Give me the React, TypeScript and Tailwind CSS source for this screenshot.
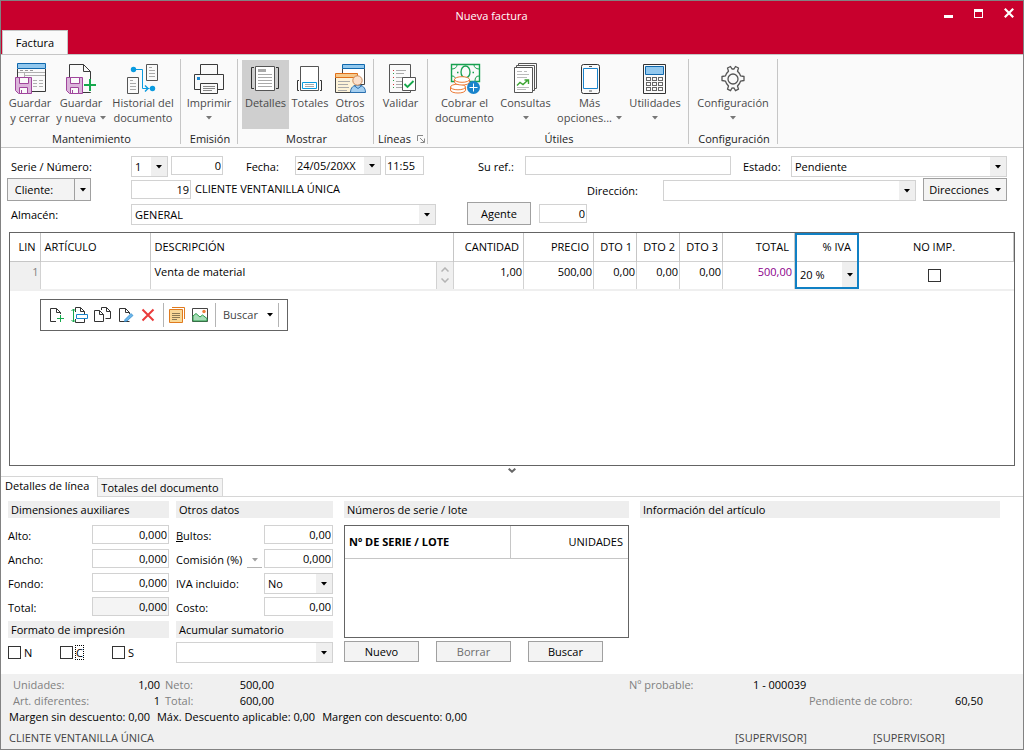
import type { ReactNode } from "react";
import clsx from "clsx";

function Svg({ children, small }: { children: ReactNode; small?: boolean }) {
  return (
    <svg
      viewBox={small ? "0 0 18 18" : "0 0 32 32"}
      className={clsx("shrink-0", small ? "h-[18px] w-[18px]" : "h-8 w-8")}
      fill="none"
      aria-hidden="true"
    >
      {children}
    </svg>
  );
}

function Caret({ className = "text-black" }: { className?: string }) {
  return (
    <svg viewBox="0 0 6 4" className={clsx("h-1 w-1.5 shrink-0", className)} aria-hidden="true">
      <path d="M0 0h6L3 3.6z" fill="currentColor" />
    </svg>
  );
}

function Floppy() {
  return (
    <>
      <path d="M1.5 15.5h16v16h-13l-3-3z" fill="#dbb4da" stroke="#a0459c" />
      <path d="M5.5 15.5h9v6h-9z" fill="#fafafa" stroke="#a0459c" />
      <path d="M5.5 31.5v-6h8v6z" fill="#fafafa" stroke="#a0459c" />
      <path d="M7.5 28v3" stroke="#a0459c" />
    </>
  );
}

/* Ribbon icons */

const IconSaveClose = () => (
  <Svg>
    <path d="M3.5 7v8M31.5 7v22.5H18" stroke="#3a3a3a" />
    <path d="M3.5 1.5h28v5h-28z" fill="#92c8ee" stroke="#1068ad" />
    <path d="M6 8.5h3m2 0h3m2 0h3" stroke="#999" />
    <path d="M4 10.5h27M10.5 11v4M10 13.5h21" stroke="#b0b0b0" />
    <path d="M19 18.5h4m2 0h4m-10 3h4m2 0h4m-10 3h4m2 0h4" stroke="#b0b0b0" />
    <Floppy />
  </Svg>
);

const IconSaveNew = () => (
  <Svg>
    <path d="M4.5 15V2.5h14l7 7V18M25.500 30v.5H18" stroke="#3a3a3a" />
    <path d="M18.5 2.5v7h7" stroke="#3a3a3a" />
    <Floppy />
    <path d="M25 17v12M19 23h12" stroke="#16a84c" strokeWidth="2" />
  </Svg>
);

const IconHistory = () => (
  <Svg>
    <path d="M19.5 2.5h11v16h-11zM.5 15.5h11v16H.5z" stroke="#555" />
    <path d="M22 5.5h3m-3 3h6m-6 3h6m-6 3h6M3 18.5h3m-3 3h6m-6 3h6m-6 3h6" stroke="#aaa" />
    <path d="M7 7.500h8.500v19h7" stroke="#0a9be0" />
    <path d="M18 23.5l3 3-3 3" stroke="#0a9be0" strokeWidth="1.4" />
    <circle cx="6.500" cy="7.500" r="2.700" fill="#0a9be0" />
    <circle cx="25.500" cy="26.500" r="2.700" fill="#0a9be0" />
  </Svg>
);

const IconPrint = () => (
  <Svg>
    <path d="M7.5 12.5v-10h17v10" stroke="#3a3a3a" />
    <path d="M7 27.5H1.5v-15h29v15H25" stroke="#3a3a3a" />
    <path d="M7.5 21.5h17v10h-17z" stroke="#3a3a3a" />
    <path d="M10 24.5h12m-12 2h12m-12 2h9" stroke="#888" />
    <path d="M4 15h3v3H4z" fill="#1e88d0" />
  </Svg>
);

const IconDetails = () => (
  <Svg>
    <path d="M5.5 4.5h19v24h-19z" fill="#fff" stroke="#555" />
    <path d="M8 7h8v3H8z" fill="#aaa" />
    <path d="M8 12.5h14m-14 3h14m-14 3h14m-14 3h14m-14 3h14" stroke="#aaa" />
    <path d="M4 5.5H1.5v21H4M26 5.5h2.500v21H26" stroke="#333" />
  </Svg>
);

const IconTotals = () => (
  <Svg>
    <path d="M6.5 4.5h18v24h-18z" fill="#fff" stroke="#555" />
    <path d="M8.5 20.5h14v6h-14z" fill="#fff" stroke="#0a9be0" />
    <path d="M11 22.5h9m-9 2h9" stroke="#aaa" />
    <path d="M5 18.5H3.5v10H5M26 18.5h1.500v10H26" stroke="#333" />
  </Svg>
);

const IconOther = () => (
  <Svg>
    <path d="M8.5 6.5h22v16h-22z" fill="#fff" stroke="#444" />
    <path d="M8.5 2.5h22v4h-22z" fill="#92c8ee" stroke="#1068ad" />
    <path d="M1.5 15.5h22v15h-22z" fill="#fdf3d8" stroke="#444" />
    <path d="M1.5 11.5h22v4h-22z" fill="#f6c98b" stroke="#e0701a" />
    <path d="M4 19.5h12m-12 3h10m-10 3h11m-11 3h9" stroke="#aaa" />
    <path d="M16.500 30.500c0-5 3-7.500 7.500-7.500s7.500 2.500 7.500 7.500z" fill="#a5cff0" stroke="#2a6fae" />
    <path d="M20 23.5l4 3 4-3" stroke="#2a6fae" />
    <circle cx="23.500" cy="18.500" r="4.700" fill="#fbe0cb" stroke="#c98a5a" />
  </Svg>
);

const IconValidate = () => (
  <Svg>
    <path d="M4.5 2.5h21v28h-21z" stroke="#555" />
    <path d="M11 8.5h10m-10 3h8m-8 4h7m-7 4h6m-6 3h6m-6 3h6" stroke="#aaa" />
    <path d="M8 8.5h1m-1 7h1m-1 7h1" stroke="#d4353a" />
    <path d="M8 11.5h1m-1 7h1m-1 7h1" stroke="#2a9d4a" />
    <path d="M17.5 15.5h13v13h-13z" fill="#fff" stroke="#555" />
    <path d="M19.500 22l3 3 6-6" stroke="#16a84c" strokeWidth="1.800" />
  </Svg>
);

const IconCash = () => (
  <Svg>
    <path d="M2.500 2.500h28v17h-28z" stroke="#17a04f" strokeWidth="1.400" />
    <path d="M3 7c3 0 5-2 5-4M30 7c-3 0-5-2-5-4M30 14c-3 0-4 2-4 5M3 14c2 0 3 1 3 2" stroke="#17a04f" />
    <ellipse cx="16.500" cy="10" rx="4.500" ry="6" stroke="#17a04f" strokeWidth="1.300" />
    <path d="M8 10.500h1.500m14 0H25" stroke="#17a04f" strokeWidth="1.600" />
    <g fill="#fff" stroke="#ec7a35">
      <path d="M1.500 25v3c0 4 15 4 15 0v-3" />
      <ellipse cx="9" cy="25" rx="7.500" ry="2.800" />
      <path d="M5.500 17v3c0 4 15 4 15 0v-3" />
      <ellipse cx="13" cy="17.500" rx="7.500" ry="2.800" />
    </g>
    <circle cx="24.500" cy="25.500" r="6.500" fill="#1a84cc" />
    <path d="M24.500 21.500v8m-4-4h8" stroke="#fff" />
  </Svg>
);

const IconQueries = () => (
  <Svg>
    <path d="M8.5 3V1.500h18v25h-2M6.500 5V3.500h18v25h-2" stroke="#555" />
    <path d="M4.5 5.5h18v25h-18z" fill="#fff" stroke="#555" />
    <path d="M7 9.5h5m2 0h3m-10 3h12m-12 3h10m-10 10h12m-12 2h9" stroke="#bbb" />
    <path d="M7 23.500l3-3 3 2 5-4.500M14.500 18h4v4" stroke="#3fa535" strokeWidth="1.400" />
  </Svg>
);

const IconPhone = () => (
  <Svg>
    <rect x="7.500" y="2.500" width="18" height="29" rx="2" stroke="#333" />
    <path d="M9.5 6.5h14v20h-14z" fill="#fff" stroke="#1a84cc" />
    <path d="M15 4.5h3m-3 24.500h3" stroke="#555" />
  </Svg>
);

const IconCalculator = () => (
  <Svg>
    <path d="M4.5 2.5h22v29h-22z" stroke="#333" />
    <path d="M6.5 4.5h18v8h-18z" fill="#92c8ee" stroke="#1068ad" />
    <g stroke="#666">
      {[15.5, 20.5, 25.5].map((y) =>
        [7.5, 13.5, 19.5].map((x) => <rect key={`${x}-${y}`} x={x} y={y} width="4" height="3" />)
      )}
    </g>
  </Svg>
);

const IconGear = () => (
  <Svg>
    <g transform="translate(-1 1)" stroke="#555" strokeWidth="1.300" strokeLinejoin="round">
      <path d="M12.500 8.200l-1-3.200 3-1.500 1.500 2.500 1-.2 1 .2 1.500-2.500 3 1.500-1 3.200 2 2.300 1 2.300 3.500.700v4l-3.500.700-1 2.300-2 2.500 1 3.200-3 1.500-1.500-2.700-1 .2-1-.2-1.500 2.700-3-1.500 1-3.200-2-2.500-1-2.300-3.500-.700v-4l3.500-.7 1-2.300z" />
      <circle cx="17" cy="16" r="5" />
    </g>
  </Svg>
);

/* Ribbon */

type RibbonItem = {
  lines: string[];
  icon: ReactNode;
  width: string;
  menu?: boolean;
  active?: boolean;
};

type RibbonGroup = {
  name: string;
  width: string;
  indent?: string;
  launcher?: boolean;
  items: RibbonItem[];
};

const GROUPS: RibbonGroup[] = [
  {
    name: "Mantenimiento",
    width: "w-[179px]",
    indent: "pl-1",
    items: [
      { lines: ["Guardar", "y cerrar"], icon: <IconSaveClose />, width: "w-[50px]" },
      { lines: ["Guardar", "y nueva"], icon: <IconSaveNew />, width: "w-[52px]", menu: true },
      { lines: ["Historial del", "documento"], icon: <IconHistory />, width: "w-[72px]" },
    ],
  },
  {
    name: "Emisión",
    width: "w-[56px]",
    items: [{ lines: ["Imprimir"], icon: <IconPrint />, width: "w-[56px]", menu: true }],
  },
  {
    name: "Mostrar",
    width: "w-[135px]",
    indent: "pl-1",
    items: [
      { lines: ["Detalles"], icon: <IconDetails />, width: "w-[47px]", active: true },
      { lines: ["Totales"], icon: <IconTotals />, width: "w-[42px]" },
      { lines: ["Otros", "datos"], icon: <IconOther />, width: "w-[38px]" },
    ],
  },
  {
    name: "Líneas",
    width: "w-[53px]",
    launcher: true,
    items: [{ lines: ["Validar"], icon: <IconValidate />, width: "w-[53px]" }],
  },
  {
    name: "Útiles",
    width: "w-[260px]",
    indent: "pl-1",
    items: [
      { lines: ["Cobrar el", "documento"], icon: <IconCash />, width: "w-[65px]" },
      { lines: ["Consultas"], icon: <IconQueries />, width: "w-[57px]", menu: true },
      { lines: ["Más", "opciones..."], icon: <IconPhone />, width: "w-[71px]", menu: true },
      { lines: ["Utilidades"], icon: <IconCalculator />, width: "w-[60px]", menu: true },
    ],
  },
  {
    name: "Configuración",
    width: "w-[88px]",
    items: [{ lines: ["Configuración"], icon: <IconGear />, width: "w-[88px]", menu: true }],
  },
];

function RibbonButton({ lines, icon, width, menu, active }: RibbonItem) {
  return (
    <button
      type="button"
      aria-pressed={active}
      className={clsx(
        "flex h-[69px] flex-col items-center pt-0.5 leading-[15px] whitespace-nowrap text-[#4a4a4a]",
        width,
        active && "bg-[#cfcfcf]"
      )}
    >
      {icon}
      <span className="mt-px">{lines[0]}</span>
      <span className="flex min-h-[15px] items-center gap-1">
        {lines[1]}
        {menu && <Caret className="text-[#777]" />}
      </span>
    </button>
  );
}

function Ribbon() {
  return (
    <nav className="flex h-[94px] border-y border-[#c6c6c6] bg-[#fafafa]">
      {GROUPS.map((g) => (
        <div key={g.name} className="flex">
          <section className={clsx("pt-[5px]", g.width)}>
            <div className={clsx("flex", g.indent)}>
              {g.items.map((item) => (
                <RibbonButton key={item.lines.join(" ")} {...item} />
              ))}
            </div>
            <div className="mt-0.5 flex items-center justify-center gap-1.5 pl-0.5 leading-4 text-[#222]">
              {g.name}
              {g.launcher && (
                <svg viewBox="0 0 8 8" className="h-2 w-2" fill="none" stroke="#888" aria-hidden="true">
                  <path d="M.5 6V.5H6M3 3l4 4M7.500 3.500v4h-4" />
                </svg>
              )}
            </div>
          </section>
          <div className="mt-1 h-[85px] w-px bg-[#c6c6c6]" />
        </div>
      ))}
    </nav>
  );
}

/* Form controls */

type ControlProps = { label: string; value?: string; className: string };

function Field({ label, value = "", className, right, readOnly }: ControlProps & { right?: boolean; readOnly?: boolean }) {
  return (
    <input
      aria-label={label}
      defaultValue={value}
      readOnly={readOnly}
      className={clsx(
        "h-[19px] min-w-0 border border-[#d2d2d2] px-px outline-none",
        right && "text-right",
        readOnly ? "bg-[#f4f4f4]" : "bg-white",
        className
      )}
    />
  );
}

function Combo({ label, value = "", className, height = "h-[21px]" }: ControlProps & { height?: string }) {
  return (
    <div className={clsx("relative border border-[#d2d2d2] bg-white", height, className)}>
      <select aria-label={label} className="block h-full w-full appearance-none bg-transparent pr-4 pl-[3px] outline-none">
        <option>{value}</option>
      </select>
      <span className="pointer-events-none absolute inset-y-0 right-0 flex w-4 items-center justify-center bg-[#efefef]">
        <Caret />
      </span>
    </div>
  );
}

const BUTTON = "flex items-center justify-center border border-[#a0a0a0] bg-[#f3f3f3]";

function InvoiceForm() {
  return (
    <form className="pt-1.5 pr-4 pl-[10px] leading-4">
      <div className="flex h-6 items-start pt-0.5">
        <span className="w-[120px] pt-[3px]">Serie / Número:</span>
        <Combo label="Serie" value="1" className="w-[37px]" />
        <Field label="Número" value="0" right className="ml-[3px] w-[52px]" />
        <span className="w-[72px] pt-[3px] pl-[23px]">Fecha:</span>
        <Combo label="Fecha" value="24/05/20XX" height="h-[19px]" className="w-[86px] [&>select]:pl-px" />
        <Field label="Hora" value="11:55" className="ml-1 w-[39px]" />
        <span className="w-[101px] pt-[3px] pl-[54px]">Su ref.:</span>
        <Field label="Su ref." className="flex-1" />
        <span className="w-[60px] pt-[3px] pl-3">Estado:</span>
        <Combo label="Estado" value="Pendiente" className="flex-[1.06]" />
      </div>

      <div className="flex h-6 items-start">
        <div className="-ml-1 flex h-[23px] w-[84px]">
          <button type="button" className={clsx(BUTTON, "w-[68px] pr-3.5")}>
            Cliente:
          </button>
          <button type="button" aria-label="Opciones de cliente" className={clsx(BUTTON, "flex-1 border-l-0")}>
            <Caret />
          </button>
        </div>
        <Field label="Código de cliente" value="19" right className="mt-0.5 ml-10 w-[60px]" />
        <span className="flex-1 pt-[3px] pl-1">CLIENTE VENTANILLA ÚNICA</span>
        <span className="w-[76px] pt-[5px]">Dirección:</span>
        <Combo label="Dirección" className="mt-0.5 w-[253px]" />
        <button type="button" className={clsx(BUTTON, "ml-[7px] h-[23px] w-[84px] gap-1.5")}>
          Direcciones
          <Caret />
        </button>
      </div>

      <div className="flex h-6 items-start">
        <span className="w-[120px] pt-[5px]">Almacén:</span>
        <Combo label="Almacén" value="GENERAL" className="mt-0.5 w-[305px]" />
        <button type="button" className={clsx(BUTTON, "ml-[31px] h-[23px] w-16")}>
          Agente
        </button>
        <Field label="Agente" value="0" right className="mt-0.5 ml-2 w-12" />
      </div>
    </form>
  );
}

/* Line grid */

const COLUMNS = [
  { name: "LIN", width: "w-[30px]", align: "text-right pr-1" },
  { name: "ARTÍCULO", width: "w-[110px]", align: "text-left pl-1" },
  { name: "DESCRIPCIÓN", width: "", align: "text-left pl-1" },
  { name: "CANTIDAD", width: "w-[70px]", align: "text-right pr-1" },
  { name: "PRECIO", width: "w-[70px]", align: "text-right pr-1" },
  { name: "DTO 1", width: "w-[43px]", align: "text-right pr-1" },
  { name: "DTO 2", width: "w-[43px]", align: "text-right pr-1" },
  { name: "DTO 3", width: "w-[43px]", align: "text-right pr-1" },
  { name: "TOTAL", width: "w-[72px]", align: "text-right pr-[5px]" },
  { name: "% IVA", width: "w-[64px]", align: "text-right pr-[7px]" },
  { name: "NO IMP.", width: "w-[155px]", align: "text-center pr-1" },
];

const AMOUNTS = ["1,00", "500,00", "0,00", "0,00", "0,00"];

function Separator() {
  return <span className="h-6 w-px bg-[#b4b4b4]" />;
}

function PageShape() {
  return <path d="M8 15.5H2.5v-13h6l4 4V8M8.5 2.5v4h4" stroke="#333" />;
}

function GridToolbar() {
  return (
    <div className="mt-2 ml-[30px] flex h-8 w-[248px] items-center border border-[#646464] bg-white pl-[7px]">
      <div className="flex gap-[5px]">
        <button type="button" aria-label="Nueva línea">
          <Svg small>
            <PageShape />
            <path d="M12.5 9v7M9 12.500h7" stroke="#16a84c" />
          </Svg>
        </button>
        <button type="button" aria-label="Insertar línea">
          <Svg small>
            <path d="M4.500 6V1.500h5l4 4V8M9.500 1.500v4h4M4.500 13v3.500h9V13" stroke="#333" />
            <path d="M5.500 8.500h11v4h-11z" fill="#fff" stroke="#1a84cc" />
            <path d="M2.500 3v13M.5 5l2-2 2 2M.5 14l2 2 2-2" stroke="#16a84c" />
          </Svg>
        </button>
        <button type="button" aria-label="Duplicar línea">
          <Svg small>
            <path d="M7.500 4V1.500h5l4 4v7h-5M12.500 1.500v4h4" stroke="#333" />
            <path d="M.5 4.500h5l4 4v7h-9z" fill="#fff" stroke="#333" />
            <path d="M5.500 4.500v4h4" stroke="#333" />
          </Svg>
        </button>
        <button type="button" aria-label="Modificar línea">
          <Svg small>
            <PageShape />
            <path d="M8 15.500h4.500" stroke="#333" />
            <path d="M8 13.500l6-6 2 2-6 5.500-2.500.500z" fill="#6bb5ea" stroke="#2a86c8" strokeWidth=".7" />
          </Svg>
        </button>
        <button type="button" aria-label="Borrar línea">
          <Svg small>
            <path d="M2.500 3.500l11 11M13.500 3.500l-11 11" stroke="#ea3b3b" strokeWidth="2" />
          </Svg>
        </button>
      </div>
      <span className="w-[5px]" />
      <Separator />
      <div className="mr-1.5 ml-1 flex gap-[5px]">
        <button type="button" aria-label="Texto">
          <Svg small>
            <path d="M4 1.500h12.500V13" stroke="#e07b1f" />
            <path d="M1.500 3.500h13v13h-13z" fill="#f8d998" stroke="#e07b1f" />
            <path d="M4 7.500h8m-8 2h8m-8 2h8m-8 2h5" stroke="#8a7a55" />
          </Svg>
        </button>
        <button type="button" aria-label="Imagen">
          <Svg small>
            <path d="M1.500 2.500h15v13h-15z" fill="#fff" stroke="#444" />
            <path d="M2 10l3-2.500 4 3.500 2.500-2 4.500 3.500V15H2z" fill="#a8dcb8" stroke="#2a9d4a" />
            <circle cx="13" cy="5.500" r="1.700" fill="#ef7d3a" />
          </Svg>
        </button>
      </div>
      <Separator />
      <button type="button" className="flex items-center gap-[9px] pr-[5px] pl-[7px] text-[#444]">
        Buscar
        <Caret />
      </button>
      <Separator />
    </div>
  );
}

function LinesGrid() {
  return (
    <div className="mx-2 mt-1.5 h-[234px] border border-[#646464] bg-white">
      <table className="w-full table-fixed border-collapse">
        <thead>
          <tr className="h-7 border-b border-[#c6c6c6]">
            {COLUMNS.map((c) => (
              <th
                key={c.name}
                className={clsx(
                  "border-r border-[#c6c6c6] font-normal",
                  c.width,
                  c.align,
                  c.name === "% IVA" && "relative"
                )}
              >
                {c.name}
                {/* Focus frame that runs over the header and the cell below */}
                {c.name === "% IVA" && (
                  <span className="pointer-events-none absolute top-0 -right-px left-0 z-10 h-14 border-2 border-[#1080c4]" />
                )}
              </th>
            ))}
          </tr>
        </thead>
        <tbody>
          <tr className="h-[29px] border-b-2 border-[#efefef] align-top leading-4">
            <td className="bg-[#f0f0f0] pt-0.5 pr-px text-right text-[#808080]">1</td>
            <td className="border border-[#d2d2d2] p-0">
              <input aria-label="Artículo" className="block h-6 w-full px-1 outline-none" />
            </td>
            <td className="border border-[#d2d2d2] p-0">
              <div className="flex h-[27px]">
                <textarea
                  aria-label="Descripción"
                  defaultValue="Venta de material"
                  className="h-full flex-1 resize-none overflow-hidden px-1 pt-0.5 outline-none"
                />
                <div className="flex w-[17px] flex-col items-center justify-evenly border-l border-[#d2d2d2] bg-[#f0f0f0]">
                  <svg viewBox="0 0 8 5" className="h-[5px] w-2" fill="none" stroke="#b4b4b4" strokeWidth="1.500" aria-hidden="true">
                    <path d="M.5 4.500L4 1l3.500 3.500" />
                  </svg>
                  <svg viewBox="0 0 8 5" className="h-[5px] w-2" fill="none" stroke="#b4b4b4" strokeWidth="1.500" aria-hidden="true">
                    <path d="M.5.5L4 4 7.500.5" />
                  </svg>
                </div>
              </div>
            </td>
            {AMOUNTS.map((a, i) => (
              <td key={i} className="border border-[#d2d2d2] pt-0.5 pr-px text-right">
                {a}
              </td>
            ))}
            <td className="border border-[#d2d2d2] pt-0.5 pr-0.5 text-right text-[#8b008b]">500,00</td>
            <td className="p-0 pr-px pl-0.5">
              <Combo label="% IVA" value="20 %" height="h-[27px]" className="border-0" />
            </td>
            <td className="p-0 pr-1 align-middle">
              <input type="checkbox" aria-label="No imprimir" className="mx-auto block h-[13px] w-[13px] appearance-none border border-[#333] bg-white" />
            </td>
          </tr>
        </tbody>
      </table>
      <GridToolbar />
    </div>
  );
}

/* Lower panels */

function PanelTitle({ children }: { children: ReactNode }) {
  return <h2 className="h-[17px] bg-[#eeeeee] pl-[3px] leading-[17px]">{children}</h2>;
}

function Row({ label, children }: { label: ReactNode; children: ReactNode }) {
  return (
    <div className="flex h-6 items-start">
      <span className="flex flex-1 pt-[3px]">{label}</span>
      {children}
    </div>
  );
}

function LinePanels() {
  return (
    <div className="flex items-start pt-1 pr-[23px] pl-[7px] leading-4">
      <section className="w-[161px]">
        <PanelTitle>Dimensiones auxiliares</PanelTitle>
        <div className="pt-[7px]">
          {["Alto", "Ancho", "Fondo", "Total"].map((n) => (
            <Row key={n} label={`${n}:`}>
              <Field label={n} value="0,000" right readOnly={n === "Total"} className="w-[77px]" />
            </Row>
          ))}
        </div>
        <PanelTitle>Formato de impresión</PanelTitle>
        <div className="flex h-[29px] items-center">
          {["N", "C", "S"].map((n) => (
            <label key={n} className="flex w-[52px] items-center gap-[3px]">
              <input type="checkbox" className="h-[13px] w-[13px] appearance-none border border-[#333] bg-white" />
              <span className={clsx("leading-[13px]", n === "C" && "outline-1 outline-dotted outline-black")}>{n}</span>
            </label>
          ))}
        </div>
      </section>

      <section className="ml-[7px] w-[157px]">
        <PanelTitle>Otros datos</PanelTitle>
        <div className="pt-[7px]">
          <Row label={<><u>B</u>ultos:</>}>
            <Field label="Bultos" value="0,00" right className="w-[69px]" />
          </Row>
          <Row
            label={
              <>
                Comisión (%)
                <button type="button" aria-label="Tipo de comisión" className="mr-0.5 ml-auto flex h-4 w-[15px] items-center justify-center border-b border-[#b4b4b4]">
                  <Caret className="text-[#a0a0a0]" />
                </button>
              </>
            }
          >
            <Field label="Comisión" value="0,000" right className="w-[69px]" />
          </Row>
          <Row label="IVA incluido:">
            <Combo label="IVA incluido" value="No" className="w-[69px]" />
          </Row>
          <Row label="Costo:">
            <Field label="Costo" value="0,00" right className="w-[69px]" />
          </Row>
        </div>
        <PanelTitle>Acumular sumatorio</PanelTitle>
        <div className="pt-1">
          <Combo label="Acumular sumatorio" className="w-full" />
        </div>
      </section>

      <section className="ml-[11px] w-[285px]">
        <PanelTitle>Números de serie / lote</PanelTitle>
        <div className="mt-[7px] h-[113px] border border-[#646464]">
          <table className="w-full table-fixed border-collapse">
            <thead>
              <tr className="h-8 border-b border-[#c6c6c6]">
                <th className="w-[165px] border-r border-[#c6c6c6] pl-1 text-left font-bold">Nº DE SERIE / LOTE</th>
                <th className="pr-[5px] text-right font-normal">UNIDADES</th>
              </tr>
            </thead>
          </table>
        </div>
        <div className="mt-[3px] flex gap-[17px]">
          {["Nuevo", "Borrar", "Buscar"].map((n) => (
            <button key={n} type="button" className={clsx(BUTTON, "h-[21px] w-[75px]", n === "Borrar" && "text-[#6d6d6d]")}>
              {n}
            </button>
          ))}
        </div>
      </section>

      <section className="ml-[11px] flex-1">
        <PanelTitle>Información del artículo</PanelTitle>
      </section>
    </div>
  );
}

function Footer() {
  return (
    <footer className="mt-[7px] flex-1 bg-[#f0f0f0] pt-[3px] leading-4">
      <div className="flex pr-10 pl-3">
        <div className="grid flex-1 grid-cols-[110px_37px_52px_62px] text-right">
          <span className="text-left text-[#808080]">Unidades:</span>
          <span>1,00</span>
          <span className="pl-[5px] text-left text-[#808080]">Neto:</span>
          <span>500,00</span>
          <span className="text-left text-[#808080]">Art. diferentes:</span>
          <span>1</span>
          <span className="pl-[5px] text-left text-[#808080]">Total:</span>
          <span>600,00</span>
        </div>
        <div className="grid w-[354px] grid-cols-[124px_56px_1fr]">
          <span className="text-[#808080]">Nº probable:</span>
          <span className="whitespace-nowrap">1 - 000039</span>
          <span />
          <span />
          <span />
          <span className="flex justify-between text-[#808080]">
            Pendiente de cobro: <span className="text-black">60,50</span>
          </span>
        </div>
      </div>
      <div className="flex gap-[7px] pl-2">
        <span>Margen sin descuento: 0,00</span>
        <span>Máx. Descuento aplicable: 0,00</span>
        <span>Margen con descuento: 0,00</span>
      </div>
      <div className="mt-[5px] flex pr-2 pl-2 text-[#444]">
        <span className="flex-1">CLIENTE VENTANILLA ÚNICA</span>
        <span className="w-[138px]">[SUPERVISOR]</span>
        <span className="w-[142px]">[SUPERVISOR]</span>
      </div>
    </footer>
  );
}

export default function App() {
  return (
    <main className="flex min-h-screen flex-col border border-[#828282] bg-white font-['Open_Sans','Noto_Sans',sans-serif] text-[11px] text-black">
      <header className="bg-[#c8002d] text-white">
        <div className="flex h-[29px] items-center">
          <h1 className="flex-1 pt-0.5 pl-[38px] text-center">Nueva factura</h1>
          <div className="flex w-[79px] items-start gap-[21px] pb-1.5">
            <button type="button" aria-label="Minimizar">
              <svg viewBox="0 0 9 10" className="h-[10px] w-[9px]" aria-hidden="true">
                <path d="M0 7h9v3H0z" fill="#fff" />
              </svg>
            </button>
            <button type="button" aria-label="Maximizar">
              <svg viewBox="0 0 9 10" className="h-[10px] w-[9px]" aria-hidden="true">
                <path d="M0 1h9v9H0zM1 4v5h7V4z" fill="#fff" fillRule="evenodd" />
              </svg>
            </button>
            <button type="button" aria-label="Cerrar">
              <svg viewBox="0 0 10 10" className="h-[10px] w-[10px]" aria-hidden="true">
                <path d="M.8.8l8.400 8.400M9.200.8L.8 9.200" stroke="#fff" strokeWidth="2.200" />
              </svg>
            </button>
          </div>
        </div>
        <button type="button" className="-mb-px ml-px block h-[25px] w-[66px] border border-b-0 border-[#c6c6c6] bg-[#fafafa] text-black">
          Factura
        </button>
      </header>
      <Ribbon />
      <InvoiceForm />
      <LinesGrid />

      <svg viewBox="0 0 8 5" className="mx-auto mt-0.5 h-[5px] w-2" fill="none" stroke="#666" strokeWidth="2" aria-hidden="true">
        <path d="M.7.700L4 3.700 7.300.7" />
      </svg>

      <div className="mt-[3px] flex items-end border-b border-[#d6d6d6] leading-4" role="tablist">
        <button type="button" role="tab" aria-selected="true" className="-mb-px h-[21px] w-[97px] border border-b-0 border-l-0 border-[#d6d6d6] bg-white pb-0.5 pl-1 text-left">
          Detalles de línea
        </button>
        <button type="button" role="tab" aria-selected="false" className="h-[18px] w-[125px] border border-b-0 border-l-0 border-[#d6d6d6] bg-[#f3f3f3]">
          Totales del documento
        </button>
      </div>
      <LinePanels />
      <Footer />
    </main>
  );
}
